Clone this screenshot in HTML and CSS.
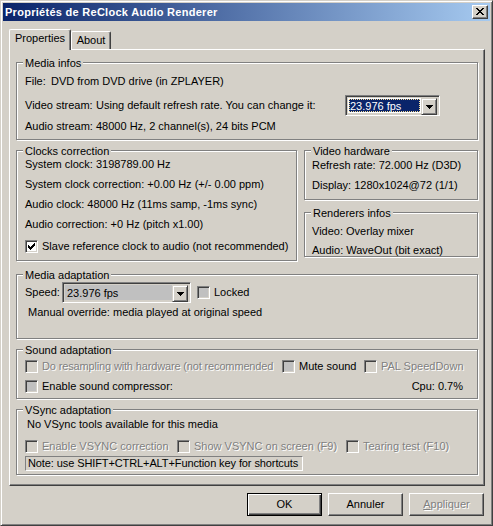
FILE: index.html
```html
<!DOCTYPE html>
<html>
<head>
<meta charset="utf-8">
<title>Propriétés de ReClock Audio Renderer</title>
<link rel="stylesheet" href="styles.css">
</head>
<body>
<div class="window">
  <div class="titlebar">
    <span class="title">Propriétés de ReClock Audio Renderer</span>
    <span class="close"><svg class="px" width="8" height="7" viewBox="0 0 8 7"><path d="M0 0h2v1H0zM6 0h2v1H6zM1 1h2v1H1zM5 1h2v1H5zM2 2h4v1H2zM3 3h2v1H3zM2 4h4v1H2zM1 5h2v1H1zM5 5h2v1H5zM0 6h2v1H0zM6 6h2v1H6z"/></svg></span>
  </div>

  <div class="tabs">
    <div class="tab active">Properties</div>
    <div class="tab about">About</div>
  </div>

  <div class="panel">
    <div class="group g-media">
      <span class="legend">Media infos</span>
      <div class="row"><span class="lbl w-file">File:</span><span>DVD from DVD drive (in ZPLAYER)</span></div>
      <div class="row row-combo gap7">
        <span class="lbl w-stream">Video stream:</span>
        <span class="w-vsval">Using default refresh rate. You can change it:</span>
        <div class="combo combo-vs">
          <div class="combo-field"><span class="sel">23.976 fps</span></div>
          <div class="combo-btn"><svg class="px" width="7" height="4" viewBox="0 0 7 4"><path d="M0 0h7v1H0zM1 1h5v1H1zM2 2h3v1H2zM3 3h1v1H3z"/></svg></div>
        </div>
      </div>
      <div class="row gap4"><span class="lbl w-stream">Audio stream:</span><span>48000 Hz, 2 channel(s), 24 bits PCM</span></div>
    </div>

    <div class="mid">
      <div class="group g-clocks">
        <span class="legend">Clocks correction</span>
        <div class="row">System clock: 3198789.00 Hz</div>
        <div class="row gap7">System clock correction: +0.00 Hz (+/- 0.00 ppm)</div>
        <div class="row gap7">Audio clock: 48000 Hz (11ms samp, -1ms sync)</div>
        <div class="row gap7">Audio correction: +0 Hz (pitch x1.00)</div>
        <div class="row gap9 check-row">
          <span class="cb"><svg class="px" width="9" height="9" viewBox="0 0 9 9"><path d="M1 3h1v3H1zM2 4h1v3H2zM3 5h1v3H3zM4 4h1v3H4zM5 3h1v3H5zM6 2h1v3H6zM7 1h1v3H7z"/></svg></span>
          <span>Slave reference clock to audio (not recommended)</span>
        </div>
      </div>
      <div class="col-right">
        <div class="group g-vh">
          <span class="legend">Video hardware</span>
          <div class="row">Refresh rate: 72.000 Hz (D3D)</div>
          <div class="row gap7">Display: 1280x1024@72 (1/1)</div>
        </div>
        <div class="group g-ri">
          <span class="legend">Renderers infos</span>
          <div class="row">Video: Overlay mixer</div>
          <div class="row gap6">Audio: WaveOut (bit exact)</div>
        </div>
      </div>
    </div>

    <div class="group g-adapt">
      <span class="legend">Media adaptation</span>
      <div class="row row-combo">
        <span class="lbl w-speed">Speed:</span>
        <div class="combo combo-speed">
          <div class="combo-field grey"><span class="plain">23.976 fps</span></div>
          <div class="combo-btn"><svg class="px" width="7" height="4" viewBox="0 0 7 4"><path d="M0 0h7v1H0zM1 1h5v1H1zM2 2h3v1H2zM3 3h1v1H3z"/></svg></div>
        </div>
        <span class="cb grey locked"></span>
        <span class="cb-text">Locked</span>
      </div>
      <div class="row gap3 indent3">Manual override: media played at original speed</div>
    </div>

    <div class="group g-sound">
      <span class="legend">Sound adaptation</span>
      <div class="row check-row">
        <div class="item w-resample"><span class="cb off"></span><span class="cb-text dis tight">Do resampling with hardware (not recommended</span></div>
        <div class="item w-mute"><span class="cb grey"></span><span class="cb-text">Mute sound</span></div>
        <div class="item"><span class="cb off"></span><span class="cb-text dis">PAL SpeedDown</span></div>
      </div>
      <div class="row check-row gap7">
        <div class="item"><span class="cb grey"></span><span class="cb-text">Enable sound compressor:</span></div>
        <span class="cpu">Cpu: 0.7%</span>
      </div>
    </div>

    <div class="group g-vsync">
      <span class="legend">VSync adaptation</span>
      <div class="row indent2">No VSync tools available for this media</div>
      <div class="row check-row gap9">
        <div class="item w-vs1"><span class="cb off"></span><span class="cb-text dis">Enable VSYNC correction</span></div>
        <div class="item w-vs2"><span class="cb off"></span><span class="cb-text dis">Show VSYNC on screen (F9)</span></div>
        <div class="item"><span class="cb off"></span><span class="cb-text dis">Tearing test (F10)</span></div>
      </div>
      <div class="note">Note: use SHIFT+CTRL+ALT+Function key for shortcuts</div>
    </div>
  </div>

  <div class="buttons">
    <div class="btn default">OK</div>
    <div class="btn">Annuler</div>
    <div class="btn dis"><span><u>A</u>ppliquer</span></div>
  </div>
</div>
</body>
</html>
```
FILE: styles.css
```css
html, body {
  margin: 0;
  padding: 0;
}
body {
  background: #D4D0C8;
  font: 11px/13px "Liberation Sans", Arial, sans-serif;
  color: #000;
}
.px {
  display: block;
  shape-rendering: crispEdges;
  fill: #000;
}

.window {
  width: 493px;
  height: 526px;
  box-sizing: border-box;
  padding: 2px;
  border: 1px solid;
  border-color: #D4D0C8 #404040 #404040 #D4D0C8;
  box-shadow: inset 1px 1px 0 #fff, inset -1px -1px 0 #808080;
  background: #D4D0C8;
  display: flex;
  flex-direction: column;
}

/* title bar */
.titlebar {
  height: 18px;
  flex-shrink: 0;
  display: flex;
  align-items: center;
  justify-content: space-between;
  padding-left: 2px;
  background: linear-gradient(to right, #0A246A, #A6CAF0);
}
.title {
  color: #fff;
  font-weight: bold;
  letter-spacing: 0.28px;
  white-space: nowrap;
}
.close {
  width: 16px;
  height: 14px;
  box-sizing: border-box;
  margin-right: 2px;
  padding: 2px 0 0 3px;
  border: 1px solid;
  border-color: #fff #404040 #404040 #fff;
  box-shadow: inset -1px -1px 0 #808080;
  background: #D4D0C8;
  display: flex;
  align-items: flex-start;
}

/* tabs */
.tabs {
  display: flex;
  align-items: flex-end;
  height: 21px;
  margin-top: 8px;
  padding-left: 6px;
  flex-shrink: 0;
}
.tab {
  box-sizing: border-box;
  height: 18px;
  padding-top: 2px;
  text-align: center;
  border-left: 1px solid #fff;
  border-top: 1px solid #fff;
  border-right: 1px solid #404040;
  box-shadow: inset -1px 0 0 #808080;
  border-radius: 2px 2px 0 0;
  background: #D4D0C8;
  white-space: nowrap;
}
.tab.active {
  position: relative;
  z-index: 1;
  width: 62px;
  height: 21px;
}
.tab.about {
  width: 40px;
  margin-bottom: 1px;
}

/* panel */
.panel {
  margin-left: 6px;
  margin-top: -1px;
  width: 476px;
  height: 437px;
  flex-shrink: 0;
  box-sizing: border-box;
  border: 1px solid;
  border-color: #fff #404040 #404040 #fff;
  box-shadow: inset -1px -1px 0 #808080;
  padding: 12px 6px 0;
}

/* group boxes */
.group {
  position: relative;
  box-sizing: border-box;
  border: 1px solid #808080;
  box-shadow: 1px 1px 0 #fff, inset 1px 1px 0 #fff;
  padding-left: 8px;
}
.legend {
  position: absolute;
  top: -6px;
  left: 6px;
  padding: 0 2px;
  background: #D4D0C8;
  white-space: nowrap;
}
.g-media { height: 78px; padding-top: 12px; }
.mid {
  display: flex;
  gap: 7px;
  margin-top: 10px;
}
.g-clocks { width: 281px; height: 111px; padding-top: 7px; }
.col-right { width: 174px; display: flex; flex-direction: column; }
.g-vh { height: 50px; padding-top: 8px; padding-left: 7px; }
.g-ri { height: 45px; margin-top: 12px; padding-top: 12px; padding-left: 7px; }
.g-adapt { height: 65px; margin-top: 13px; padding-top: 7px; }
.g-sound { height: 50px; margin-top: 10px; padding-top: 10px; padding-right: 8px; }
.g-vsync { height: 66px; margin-top: 10px; padding-top: 8px; }

/* rows */
.row {
  display: flex;
  align-items: center;
  height: 13px;
  white-space: nowrap;
}
.row-combo { height: 21px; }
.gap3 { margin-top: 3px; }
.gap4 { margin-top: 4px; }
.gap6 { margin-top: 6px; }
.gap7 { margin-top: 7px; }
.gap9 { margin-top: 9px; }
.indent2 { padding-left: 2px; }
.indent3 { padding-left: 3px; }

.lbl { flex-shrink: 0; }
.w-file { width: 26px; }
.w-stream { width: 71px; }
.w-vsval { width: 249px; flex-shrink: 0; }
.w-speed { width: 37px; }

/* combo boxes */
.combo {
  height: 21px;
  box-sizing: border-box;
  border: 1px solid;
  border-color: #808080 #fff #fff #808080;
  box-shadow: inset 1px 1px 0 #404040, inset -1px -1px 0 #D4D0C8;
  padding: 2px;
  display: flex;
  flex-shrink: 0;
}
.combo-vs { width: 95px; }
.combo-speed { width: 129px; }
.combo-field {
  flex: 1;
  background: #fff;
  padding: 1px;
  display: flex;
}
.combo-field.grey {
  background: #C0C0C0;
  padding: 2px 0 0 2px;
}
.sel {
  flex: 1;
  background: #0A246A;
  color: #fff;
  outline: 1px dotted #F5DB95;
  outline-offset: -1px;
  padding-left: 1px;
  line-height: 15px;
}
.plain { line-height: 13px; }
.combo-btn {
  width: 16px;
  height: 17px;
  box-sizing: border-box;
  border: 1px solid;
  border-color: #D4D0C8 #404040 #404040 #D4D0C8;
  box-shadow: inset 1px 1px 0 #fff, inset -1px -1px 0 #808080;
  background: #D4D0C8;
  display: flex;
  justify-content: center;
  padding-top: 6px;
}

/* checkboxes */
.cb {
  width: 13px;
  height: 13px;
  box-sizing: border-box;
  flex-shrink: 0;
  border: 1px solid;
  border-color: #808080 #fff #fff #808080;
  box-shadow: inset 1px 1px 0 #404040, inset -1px -1px 0 #D4D0C8;
  background: #fff;
  padding: 1px;
}
.cb.off { background: #D4D0C8; }
.cb.grey { background: #C0C0C0; }
.cb.locked { margin-left: 6px; }
.check-row .cb + span { margin-left: 4px; }
.cb-text { margin-left: 4px; }
.item {
  display: flex;
  align-items: center;
  flex-shrink: 0;
}
.w-resample { width: 257px; }
.w-mute { width: 82px; }
.w-vs1 { width: 152px; }
.w-vs2 { width: 169px; }
.cpu { margin-left: auto; margin-right: 6px; }

.dis {
  color: #808080;
  text-shadow: 1px 1px 0 #fff;
}
.tight { letter-spacing: -0.15px; }

.note {
  margin-top: 3px;
  width: 278px;
  height: 15px;
  box-sizing: border-box;
  border: 1px solid;
  border-color: #808080 #fff #fff #808080;
  padding-left: 2px;
  white-space: nowrap;
  letter-spacing: -0.1px;
}

/* buttons */
.buttons {
  display: flex;
  justify-content: flex-end;
  gap: 6px;
  margin-top: 7px;
  padding-right: 6px;
}
.btn {
  width: 75px;
  height: 23px;
  box-sizing: border-box;
  border: 1px solid;
  border-color: #fff #404040 #404040 #fff;
  box-shadow: inset -1px -1px 0 #808080;
  background: #D4D0C8;
  display: flex;
  align-items: center;
  justify-content: center;
}
.btn.default {
  border-color: #000;
  box-shadow: inset 1px 1px 0 #fff, inset -1px -1px 0 #404040, inset -2px -2px 0 #808080;
}
.btn.dis u { text-decoration: underline; }
```
